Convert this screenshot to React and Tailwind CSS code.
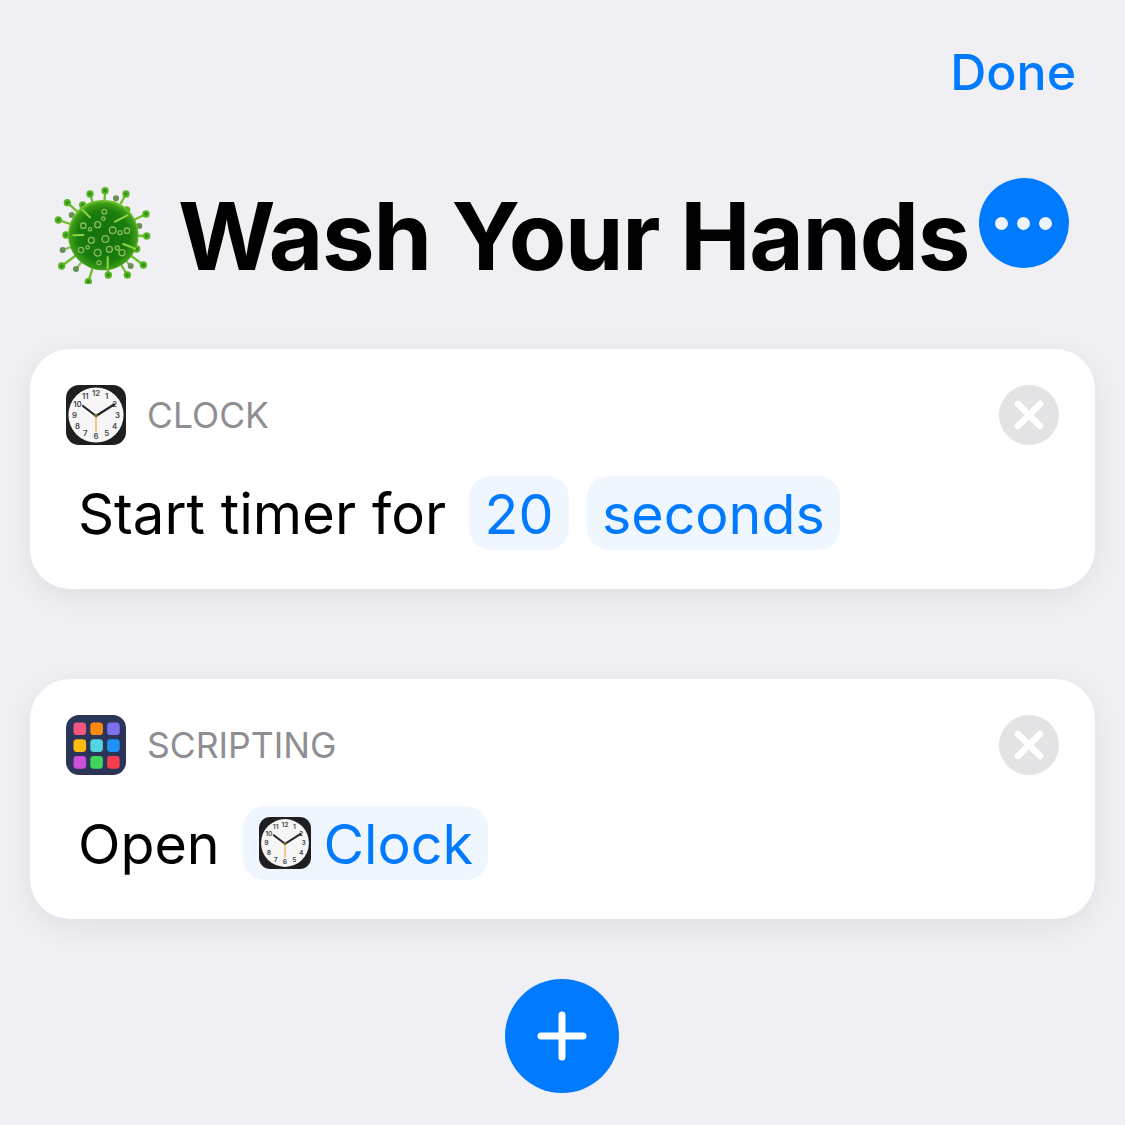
const FONT = { fontFamily: "Inter, 'Liberation Sans', sans-serif" };

function ClockIcon({ className }) {
  const numbers = [12, 1, 2, 3, 4, 5, 6, 7, 8, 9, 10, 11];
  return (
    <svg viewBox="0 0 60 60" className={className}>
      <rect width="60" height="60" rx="13" fill="#1f1f22" />
      <circle cx="30" cy="30" r="27.6" fill="#f6f6f6" />
      {numbers.map((n, i) => {
        const a = (i * Math.PI) / 6;
        return (
          <text
            key={n}
            x={30 + 21.5 * Math.sin(a)}
            y={30 - 21.5 * Math.cos(a) + 2.8}
            textAnchor="middle"
            fontSize="7.8"
            fontWeight="600"
            fill="#48484a"
            fontFamily="Inter, sans-serif"
          >
            {n}
          </text>
        );
      })}
      <path d="M30 30 L30 47" stroke="#f3c98b" strokeWidth="2.2" />
      <path d="M30 31 L17 21 M30 31 L48 19.5" stroke="#242426" strokeWidth="2.2" strokeLinecap="round" />
      <circle cx="30" cy="30.5" r="1.8" fill="#8a6a2c" />
    </svg>
  );
}

function ScriptingIcon({ className }) {
  const colors = ["#f2587f", "#fb8a0e", "#7e6ff0", "#fdbb0e", "#54d5e2", "#1d93f3", "#cf4fdd", "#41d65a", "#f83d50"];
  return (
    <svg viewBox="0 0 60 60" className={className}>
      <rect width="60" height="60" rx="13" fill="#2b3558" />
      {colors.map((c, i) => (
        <rect key={c} x={7.5 + (i % 3) * 16.8} y={7.5 + Math.floor(i / 3) * 16.8} width="12.6" height="12.6" rx="3.4" fill={c} />
      ))}
    </svg>
  );
}

// coordinates follow the 3x crop of the reference, so spike tips line up by eye
function VirusIcon({ className }) {
  const spikes = [
    [195, 62], [258, 72], [318, 132], [320, 198], [290, 237], [310, 285], [262, 315], [205, 315],
    [145, 335], [65, 288], [78, 195], [55, 150], [82, 98], [150, 72], [128, 105], [260, 120],
  ];
  const backSpikes = [[228, 85], [95, 135], [298, 168], [68, 240], [108, 297], [272, 288]];
  const spots = [
    [193, 125, 7], [130, 167, 8], [173, 164, 9], [218, 181, 10], [261, 182, 8], [154, 211, 9], [196, 207, 10], [208, 238, 9],
    [173, 248, 10], [123, 240, 8], [246, 248, 9], [150, 178, 5], [240, 188, 6], [143, 232, 5], [232, 234, 6], [190, 146, 5], [177, 278, 6],
  ];
  return (
    <svg viewBox="36 36 306 306" className={className}>
      <defs>
        <radialGradient id="virusBody" cx="50%" cy="52%" r="52%">
          <stop offset="0%" stopColor="#127008" />
          <stop offset="70%" stopColor="#1a7d0c" />
          <stop offset="90%" stopColor="#3d9c18" />
          <stop offset="100%" stopColor="#86cf38" />
        </radialGradient>
        <filter id="virusBlur">
          <feGaussianBlur stdDeviation="2" />
        </filter>
      </defs>
      <g filter="url(#virusBlur)">
        {backSpikes.map(([x, y], i) => (
          <g key={i}>
            <line x1="190" y1="195" x2={x} y2={y} stroke="#8fb56e" strokeWidth="6" />
            <circle cx={x} cy={y} r="9" fill="#6c8f55" />
          </g>
        ))}
        {spikes.map(([x, y], i) => (
          <g key={i}>
            <line x1="190" y1="195" x2={x} y2={y} stroke="#6cbf2a" strokeWidth="7" />
            <circle cx={x} cy={y} r="11" fill="#58b524" />
            <circle cx={x} cy={y} r="5" fill="#2f9114" />
          </g>
        ))}
        <circle cx="190" cy="195" r="106" fill="url(#virusBody)" />
        <path d="M150 142 L128 120 M225 155 L262 136 M130 195 L100 196 M250 222 L285 236 M203 262 L203 296" stroke="#8fd444" strokeWidth="6" strokeLinecap="round" />
        {spots.map(([x, y, r], i) => (
          <circle key={i} cx={x} cy={y} r={r} fill="#1f7512" stroke="#86bd5a" strokeWidth="4" />
        ))}
      </g>
    </svg>
  );
}

function CloseButton() {
  return (
    <div className="w-[60px] h-[60px] rounded-full bg-[#e3e3e6] flex items-center justify-center">
      <svg viewBox="0 0 30 30" className="w-[30px] h-[30px]">
        <path d="M4 4 L26 26 M26 4 L4 26" stroke="#fff" strokeWidth="6.5" strokeLinecap="round" />
      </svg>
    </div>
  );
}

function Token({ children, className }) {
  return (
    <span className={`h-[74px] rounded-[22px] bg-[#f0f6fe] text-[#007aff] flex items-center ${className}`}>
      {children}
    </span>
  );
}

function ActionCard({ icon, label, children }) {
  return (
    <div className="h-[240px] rounded-[40px] bg-white shadow-[0_8px_32px_rgba(0,0,0,0.07)] pt-[36px] pl-[36px] pr-[36px]">
      <div className="flex items-center h-[60px]">
        {icon}
        <span className="ml-[21px] pt-[2px] text-[35.5px] text-[#8e8e93] flex-1">{label}</span>
        <CloseButton />
      </div>
      <div className="flex items-center h-[74px] mt-[31px] pl-[12px] text-[55.5px] text-black">{children}</div>
    </div>
  );
}

export default function App() {
  return (
    <div className="w-[1125px] h-[1125px] bg-[#efeff4] overflow-hidden flex flex-col" style={FONT}>
      <div className="h-[147px] pr-[49px] pt-[41px] flex justify-end">
        <span className="text-[50px] leading-[62px] font-medium text-[#007aff]">Done</span>
      </div>

      <div className="h-[202px] pl-[52px] flex items-start">
        <VirusIcon className="w-[102px] h-[102px] mt-[35px] shrink-0" />
        <h1 className="ml-[24px] mt-[33px] text-[94px] leading-[112px] font-bold text-black tracking-[-1.3px] whitespace-nowrap">
          Wash Your Hands
        </h1>
        <div className="ml-[10px] mt-[31px] w-[90px] h-[90px] rounded-full bg-[#007aff] flex items-center justify-center gap-[9px] shrink-0">
          <span className="w-[13px] h-[13px] rounded-full bg-[#eef4fd]" />
          <span className="w-[13px] h-[13px] rounded-full bg-[#eef4fd]" />
          <span className="w-[13px] h-[13px] rounded-full bg-[#eef4fd]" />
        </div>
      </div>

      <div className="px-[30px] flex flex-col gap-[90px]">
        <ActionCard icon={<ClockIcon className="w-[60px] h-[60px]" />} label="CLOCK">
          <span className="pt-[2px] text-[56.3px]">Start timer for</span>
          <Token className="ml-[23px] px-[15.5px]">
            <span className="pt-[2px]">20</span>
          </Token>
          <Token className="ml-[18px] px-[15px]">
            <span className="pt-[2px]">seconds</span>
          </Token>
        </ActionCard>
        <ActionCard icon={<ScriptingIcon className="w-[60px] h-[60px]" />} label="SCRIPTING">
          <span className="pt-[2px]">Open</span>
          <Token className="ml-[23px] pl-[16px] pr-[15px]">
            <ClockIcon className="w-[52px] h-[52px] mr-[13px]" />
            <span className="pt-[2px]">Clock</span>
          </Token>
        </ActionCard>
      </div>

      <div className="mt-[60px] pr-[1px] flex justify-center">
        <div className="w-[114px] h-[114px] rounded-full bg-[#007aff] flex items-center justify-center">
          <svg viewBox="0 0 50 50" className="w-[50px] h-[50px]">
            <path d="M25 4 V46 M4 25 H46" stroke="#fff" strokeWidth="7" strokeLinecap="round" />
          </svg>
        </div>
      </div>
    </div>
  );
}
